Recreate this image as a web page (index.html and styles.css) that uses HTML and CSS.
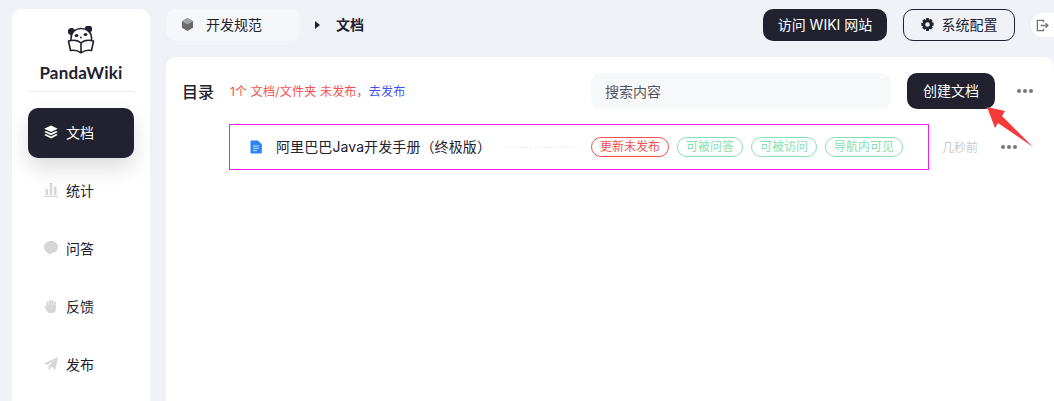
FILE: index.html
```html
<!DOCTYPE html>
<html>
<head>
    <title>PandaWiki</title>
    <meta name="viewport" content="width=device-width, initial-scale=1.0">
    <link rel="stylesheet" href="styles.css">
</head>
<body>
    <div class="wrapper">
        <!-- Sidebar -->
        <div class="sidebar">
            <div class="logo">
                <svg class="logo-icon" viewBox="0 0 28 28" width="28" height="28" fill="none" stroke="#21212f" stroke-width="1.6" stroke-linejoin="round">
                    <circle cx="4.5" cy="5.5" r="2.8" fill="#21212f"/>
                    <circle cx="21.5" cy="3" r="2.8" fill="#21212f"/>
                    <path d="M4 12C4 6 9 2.5 14 2.5C20 2.5 24.5 6.5 24.5 12V17H4Z" fill="#fff"/>
                    <ellipse cx="9.5" cy="9.5" rx="1.9" ry="1.5" fill="#21212f" stroke="none"/>
                    <ellipse cx="18.5" cy="8.5" rx="1.9" ry="1.5" fill="#21212f" stroke="none"/>
                    <circle cx="14" cy="11.5" r=".9" fill="#21212f" stroke="none"/>
                    <path d="M14 17C11 14 7 13.5 1.5 15L3.5 24.5C7.5 23.8 11 24.5 14 26.8C17 24.5 20.5 23.8 24.5 24.5L26.5 15C21 13.5 17 14 14 17V26.8" fill="#fff"/>
                </svg>
                <div class="logo-text">PandaWiki</div>
            </div>
            <div class="nav">
                <div class="nav-item active">
                    <svg viewBox="0 0 14 14" width="14" height="14" fill="#fff"><path d="M7 .5L13.8 3.8L7 7.1L.2 3.8Z"/><path d="M2 5.9L7 8.3L12 5.9L13.8 6.9L7 10.2L.2 6.9Z"/><path d="M2 9L7 11.4L12 9L13.8 10L7 13.5L.2 10Z"/></svg>
                    <span>文档</span>
                </div>
                <div class="nav-item">
                    <svg viewBox="0 0 14 14" width="14" height="14" fill="#d6d6d6"><rect x="1.5" y="6" width="2.6" height="6"/><rect x="5.7" y="0" width="2.6" height="12"/><rect x="9.9" y="3.5" width="2.6" height="8.5"/><rect x="0" y="12.8" width="14" height="1.2"/></svg>
                    <span>统计</span>
                </div>
                <div class="nav-item">
                    <svg viewBox="0 0 14 14" width="14" height="14" fill="#d6d6d6"><path d="M7 0C11 0 14 2.5 14 6C14 9.5 11 12 7.5 12L6 14C5 12.4 0 11 0 6C0 2.5 3 0 7 0Z"/></svg>
                    <span>问答</span>
                </div>
                <div class="nav-item">
                    <svg viewBox="0 0 14 14" width="14" height="14" fill="#d6d6d6"><rect x="2.6" y="2.4" width="2" height="7" rx="1"/><rect x="5" y=".8" width="2" height="8" rx="1"/><rect x="7.4" y="1" width="2" height="8" rx="1"/><rect x="9.8" y="2.4" width="2" height="7" rx="1"/><path d="M2.6 6.5H11.8V10.5C11.8 12.6 10.3 14 8.4 14H6.4C4.7 14 3.8 13.2 3 12L.6 8.4C.2 7.6 1 6.8 1.8 7.4L2.6 8.2Z"/></svg>
                    <span>反馈</span>
                </div>
                <div class="nav-item">
                    <svg viewBox="0 0 14 14" width="14" height="14" fill="#d6d6d6"><path d="M14 0L11.5 12.5L7.2 9.8L5 14L4.5 9L11 2.8L3 8L0 6.5Z"/></svg>
                    <span>发布</span>
                </div>
            </div>
        </div>

        <div class="main">
            <!-- Top bar -->
            <div class="topbar">
                <div class="crumb">
                    <svg viewBox="0 0 14 14" width="13" height="13"><path d="M7 0L13 3.4V10.6L7 14L1 10.6V3.4Z" fill="#6b6b6b"/><path d="M7 0L13 3.4L7 6.9L1 3.4Z" fill="#a4a4a4"/></svg>
                    <span>开发规范</span>
                </div>
                <span class="crumb-arrow"></span>
                <span class="crumb-current">文档</span>
                <div class="topbar-right">
                    <button type="button" class="btn-dark btn-wiki">访问 WIKI 网站</button>
                    <button type="button" class="btn-outline">
                        <svg viewBox="0 0 16 16" width="13" height="13"><path fill="#21212f" fill-rule="evenodd" d="M6.5 0H9.5L10 2.2L11.9 1.1L14.4 3.4L13.2 5.3L15.6 5.8V9.2L13.4 9.8L14.5 11.8L12.2 14.2L10.2 13.1L9.6 16H6.4L5.8 13.2L3.9 14.4L1.5 12L2.7 10L.4 9.4V6.2L2.7 5.7L1.6 3.7L3.9 1.3L5.9 2.4ZM8 5.2A2.8 2.8 0 1 0 8 10.8A2.8 2.8 0 1 0 8 5.2Z"/></svg>
                        <span>系统配置</span>
                    </button>
                    <div class="logout">
                        <svg viewBox="0 0 14 14" width="13" height="13" fill="none" stroke="#777" stroke-width="1.5"><path d="M8 3.5V1.5H1.5V12.5H8V10.5"/><path d="M5 7H12.5M10.3 4.6L12.8 7L10.3 9.4"/></svg>
                    </div>
                </div>
            </div>

            <!-- Doc panel -->
            <div class="panel">
                <div class="panel-head">
                    <h2>目录</h2>
                    <span class="notice">1个 文档/文件夹 未发布，<a>去发布</a></span>
                    <input class="search" type="text" placeholder="搜索内容">
                    <button type="button" class="btn-dark btn-create">创建文档</button>
                    <span class="dots"><i></i><i></i><i></i></span>
                </div>
                <div class="doc-line">
                    <div class="doc-row">
                        <svg viewBox="0 0 12 14" width="12" height="14"><path d="M1.5 .5H8L11.8 4.2V12.5C11.8 13.1 11.3 13.5 10.8 13.5H1.5C.9 13.5 .5 13.1 .5 12.5V1.5C.5 .9 .9 .5 1.5 .5Z" fill="#2a84f5"/><path d="M3 6H9M3 8.3H9M3 10.6H7" stroke="#cfe3fd" stroke-width="1"/></svg>
                        <span class="doc-title">阿里巴巴Java开发手册（终极版）</span>
                        <span class="doc-fill"></span>
                        <span class="tag tag-red">更新未发布</span>
                        <span class="tag tag-green">可被问答</span>
                        <span class="tag tag-green">可被访问</span>
                        <span class="tag tag-green">导航内可见</span>
                    </div>
                    <span class="doc-time">几秒前</span>
                    <span class="dots dots-row"><i></i><i></i><i></i></span>
                </div>
            </div>
        </div>
    </div>

    <!-- Red arrow drawn over the page -->
    <svg class="arrow" viewBox="0 0 50 42" width="50" height="42"><path d="M0 1L18 5L15 10L46 41L11 17L8 22Z" fill="#f63a3a"/></svg>
</body>
</html>
```

FILE: styles.css
```css
* {
    box-sizing: border-box;
    margin: 0;
    padding: 0;
}

html, body {
    height: 100%;
    overflow: hidden;
}

body {
    font-family: "Inter", "Noto Sans CJK SC", sans-serif;
    background-color: #f1f2f8;
    color: #21212f;
    font-size: 14px;
}

.wrapper {
    display: flex;
    height: 100%;
    padding: 9px 0 0 12px;
    gap: 16px;
}

/* Sidebar */
.sidebar {
    width: 138px;
    flex-shrink: 0;
    background-color: #fff;
    border-radius: 10px 10px 0 0;
    padding: 17px 16px 0;
}

.logo {
    display: flex;
    flex-direction: column;
    align-items: center;
    height: 66px;
    border-bottom: 1px solid #ecedf0;
}
.logo-icon {
    display: block;
}
.logo-text {
    font-family: "Lato", sans-serif;
    font-size: 17px;
    font-weight: 700;
    letter-spacing: 0.2px;
    line-height: 18px;
    margin-top: 10px;
}

.nav {
    margin-top: 16px;
}
.nav-item {
    display: flex;
    align-items: center;
    gap: 8px;
    height: 50px;
    padding: 0 0 2px 16px;
    margin-bottom: 8px;
    border-radius: 10px;
    font-size: 14px;
}
.nav-item.active {
    background-color: #21212f;
    color: #fff;
    box-shadow: 0 10px 20px rgba(33, 33, 47, 0.15);
}

/* Top bar */
.main {
    flex: 1;
    min-width: 0;
    display: flex;
    flex-direction: column;
}
.topbar {
    display: flex;
    align-items: center;
    height: 32px;
}
.crumb {
    display: flex;
    align-items: center;
    gap: 12px;
    width: 134px;
    height: 32px;
    padding: 0 0 2px 15px;
    background-color: #f6f7fa;
    border-radius: 10px;
}
.crumb-arrow {
    width: 0;
    height: 0;
    margin-left: 15px;
    border-left: 5px solid #21212f;
    border-top: 4px solid transparent;
    border-bottom: 4px solid transparent;
}
.crumb-current {
    margin-left: 16px;
    font-size: 14px;
    font-weight: 700;
    padding-bottom: 2px;
}
.topbar-right {
    margin-left: auto;
    display: flex;
    align-items: center;
}
.btn-dark {
    font-family: inherit;
    font-size: 14px;
    color: #fff;
    background-color: #21212f;
    border: none;
    border-radius: 10px;
    padding-bottom: 2px;
}
.btn-wiki {
    width: 124px;
    height: 32px;
}
.btn-outline {
    display: flex;
    align-items: center;
    justify-content: center;
    gap: 8px;
    width: 112px;
    height: 32px;
    margin-left: 16px;
    padding-bottom: 2px;
    font-family: inherit;
    font-size: 14px;
    color: #21212f;
    background: transparent;
    border: 1px solid #21212f;
    border-radius: 10px;
}
.logout {
    display: flex;
    align-items: center;
    justify-content: center;
    width: 23px;
    height: 24px;
    margin-left: 16px;
    border-radius: 12px 0 0 12px;
    background-color: #fff;
}

/* Panel */
.panel {
    flex: 1;
    margin-top: 16px;
    background-color: #fff;
    border-radius: 10px 10px 0 0;
    padding: 16px 0 0 16px;
}
.panel-head {
    display: flex;
    align-items: center;
    height: 36px;
}
.panel-head h2 {
    font-size: 16px;
    font-weight: 500;
    padding-bottom: 1px;
}
.notice {
    margin-left: 16px;
    padding-bottom: 2px;
    font-size: 12px;
    letter-spacing: 0.2px;
    color: #f64e4e;
}
.notice a {
    color: #3f50f0;
}
.search {
    width: 300px;
    height: 36px;
    margin-left: auto;
    padding-left: 14px;
    font-family: inherit;
    font-size: 14px;
    background-color: #f7f8fa;
    border: none;
    border-radius: 10px;
}
.search::placeholder {
    color: #55555f;
}
.btn-create {
    width: 88px;
    height: 36px;
    margin-left: 16px;
}
.dots {
    display: flex;
    gap: 2px;
    margin: 0 21px 0 22px;
}
.dots i {
    width: 4px;
    height: 4px;
    border-radius: 50%;
    background-color: #777;
}

.doc-line {
    display: flex;
    align-items: center;
    margin: 15px 0 0 47px;
}
.doc-row {
    display: flex;
    align-items: center;
    width: 700px;
    height: 46px;
    padding-left: 20px;
    border: 1px solid #f01ff0;
}
.doc-title {
    margin-left: 14px;
    padding-bottom: 2px;
    font-size: 14px;
    letter-spacing: 0.1px;
}
.doc-fill {
    flex: 1;
    margin: 0 14px;
    border-top: 1px dashed #ececec;
}
.tag {
    height: 20px;
    margin-right: 8px;
    padding: 0 8px;
    font-size: 12px;
    line-height: 17px;
    border: 1px solid;
    border-radius: 10px;
}
.tag-red {
    color: #f64e4e;
    border-color: #f64e4e;
}
.tag-green {
    color: #86dfb1;
    border-color: #86dfb1;
}
.tag:last-child {
    margin-right: 25px;
}
.doc-time {
    margin-left: 13px;
    padding-bottom: 2px;
    font-size: 12px;
    color: #c9c9c9;
}
.dots-row {
    margin: 0 0 0 23px;
}

.arrow {
    position: absolute;
    left: 987px;
    top: 106px;
}
```
